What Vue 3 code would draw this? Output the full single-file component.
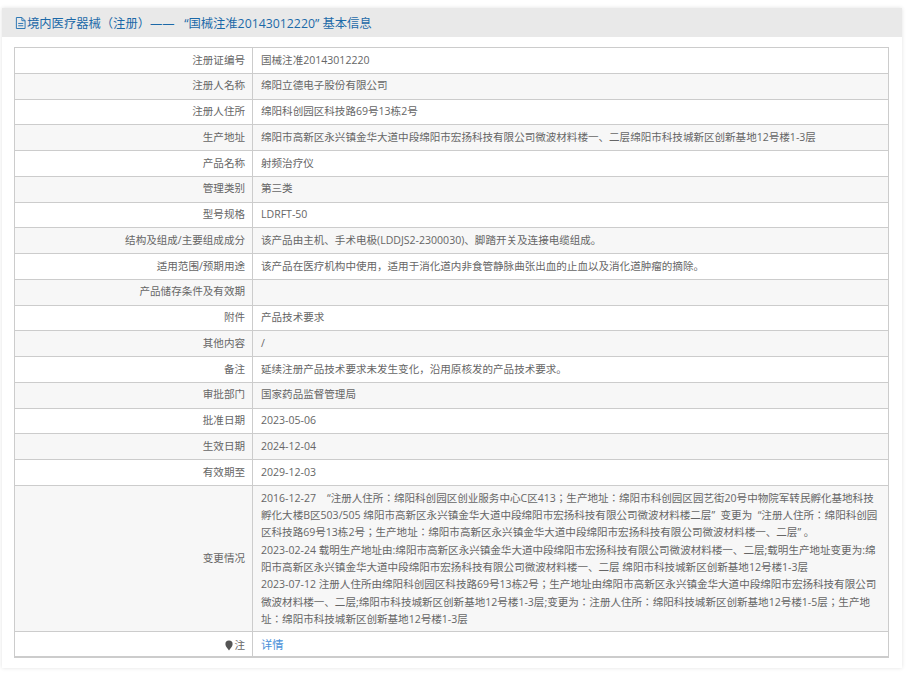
<script setup>
const rows = [
  { label: '注册证编号', value: '国械注准20143012220' },
  { label: '注册人名称', value: '绵阳立德电子股份有限公司' },
  { label: '注册人住所', value: '绵阳科创园区科技路69号13栋2号' },
  { label: '生产地址', value: '绵阳市高新区永兴镇金华大道中段绵阳市宏扬科技有限公司微波材料楼一、二层绵阳市科技城新区创新基地12号楼1-3层' },
  { label: '产品名称', value: '射频治疗仪' },
  { label: '管理类别', value: '第三类' },
  { label: '型号规格', value: 'LDRFT-50' },
  { label: '结构及组成/主要组成成分', value: '该产品由主机、手术电极(LDDJS2-2300030)、脚踏开关及连接电缆组成。' },
  { label: '适用范围/预期用途', value: '该产品在医疗机构中使用，适用于消化道内非食管静脉曲张出血的止血以及消化道肿瘤的摘除。' },
  { label: '产品储存条件及有效期', value: '' },
  { label: '附件', value: '产品技术要求' },
  { label: '其他内容', value: '/' },
  { label: '备注', value: '延续注册产品技术要求未发生变化，沿用原核发的产品技术要求。' },
  { label: '审批部门', value: '国家药品监督管理局' },
  { label: '批准日期', value: '2023-05-06' },
  { label: '生效日期', value: '2024-12-04' },
  { label: '有效期至', value: '2029-12-03' },
]

const changes = [
  '2016-12-27 \u00a0\u00a0\u00a0“注册人住所：绵阳科创园区创业服务中心C区413；生产地址：绵阳市科创园区园艺街20号中物院军转民孵化基地科技孵化大楼B区503/505 绵阳市高新区永兴镇金华大道中段绵阳市宏扬科技有限公司微波材料楼二层”\u00a0\u00a0变更为\u00a0\u00a0“注册人住所：绵阳科创园区科技路69号13栋2号；生产地址：绵阳市高新区永兴镇金华大道中段绵阳市宏扬科技有限公司微波材料楼一、二层”\u00a0。',
  '2023-02-24 载明生产地址由:绵阳市高新区永兴镇金华大道中段绵阳市宏扬科技有限公司微波材料楼一、二层;载明生产地址变更为:绵阳市高新区永兴镇金华大道中段绵阳市宏扬科技有限公司微波材料楼一、二层 绵阳市科技城新区创新基地12号楼1-3层',
  '2023-07-12 注册人住所由绵阳科创园区科技路69号13栋2号；生产地址由绵阳市高新区永兴镇金华大道中段绵阳市宏扬科技有限公司微波材料楼一、二层;绵阳市科技城新区创新基地12号楼1-3层;变更为：注册人住所：绵阳科技城新区创新基地12号楼1-5层；生产地址：绵阳市科技城新区创新基地12号楼1-3层',
]
</script>

<template>
  <div class="page">
    <div class="card">
      <div class="title">
        <svg class="doc" viewBox="0 0 12 13" width="11" height="12">
          <path d="M1.500 .5h6l3.500 3.500v8.500h-9.500z M7.500 .5v3.500h3.500" fill="none" stroke="#1f6fb0" />
          <path d="M3.500 7h5.500M3.500 9.500h5.500" stroke="#1f6fb0" />
        </svg>
        <span>境内医疗器械（注册）——&nbsp;&nbsp;&nbsp;“国械注准20143012220”&nbsp;基本信息</span>
      </div>
      <div class="body">
        <table>
          <tbody>
            <tr v-for="r in rows" :key="r.label">
              <th>{{ r.label }}</th>
              <td>{{ r.value }}</td>
            </tr>
            <tr class="tall">
              <th>变更情况</th>
              <td>
                <div v-for="c in changes" :key="c">{{ c }}</div>
              </td>
            </tr>
            <tr class="last">
              <th>
                <svg class="pin" viewBox="0 0 8 11" width="8" height="11">
                  <path d="M4 .5a3.600 3.600 0 0 1 3.600 3.700c0 2.400-2.400 4.400-3.600 6.300c-1.200-1.900-3.600-3.900-3.600-6.300a3.600 3.600 0 0 1 3.600-3.700z" fill="#555" />
                </svg>注
              </th>
              <td><a class="more">详情</a></td>
            </tr>
          </tbody>
        </table>
      </div>
    </div>
  </div>
</template>

<style scoped>
.page {
  width: 907px;
  height: 678px;
  padding: 8px 5px 0 2px;
  box-sizing: border-box;
  font-family: "Open Sans", "Noto Sans CJK JP", sans-serif;
}

.card {
  height: 660px;
  box-shadow: 0 0 4px rgba(0, 0, 0, .12);
  background: #fff;
}

.title {
  height: 29px;
  background: #e9e9e9;
  display: flex;
  align-items: center;
  gap: 1px;
  padding: 1px 0 0 13px;
  box-sizing: border-box;
  font-size: 12.300px;
  color: #1c69a8;
}

.doc {
  flex: none;
}

.body {
  padding: 10px 14px 0 12px;
}

table {
  width: 875px;
  border-collapse: collapse;
  table-layout: fixed;
  border: 1px solid #ccc;
  border-bottom-width: 2px;
  font-size: 10.550px;
  color: #666;
}

tr {
  height: 25.750px;
}

tr:nth-child(even) {
  background: #f7f7f7;
}

th,
td {
  border: 1px solid #ccc;
  padding: 0 8px;
  line-height: 17.300px;
}

th {
  width: 238px;
  box-sizing: border-box;
  padding-right: 7px;
  font-weight: 400;
  text-align: right;
}

.tall td {
  padding: 4px 8px 3px;
}

.last th,
.last td {
  padding-top: 2px;
}

.pin {
  vertical-align: -2px;
  margin-right: 1px;
}

.more {
  color: #4a90d9;
  font-size: 11.300px;
}
</style>
